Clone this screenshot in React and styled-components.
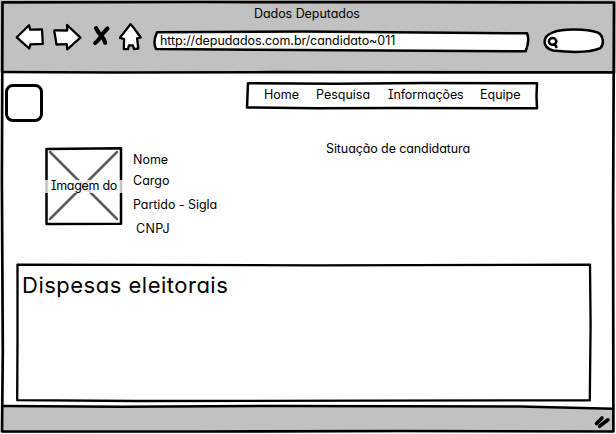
import React from "react";
import styled, { createGlobalStyle } from "styled-components";

const GlobalStyle = createGlobalStyle`
  * { box-sizing: border-box; }
  body {
    margin: 0;
    background: #fff;
    color: #000;
    font-family: Inter, "Noto Sans", sans-serif;
    font-feature-settings: "cv11" 1, "cv08" 1;
  }
`;

const Window = styled.main`
  position: relative;
  width: 616px;
  height: 434px;
  display: flex;
  flex-direction: column;
  overflow: hidden;
  background: #fff;
`;

const Outline = styled.svg`
  position: absolute;
  inset: 0;
  width: 100%;
  height: 100%;
  overflow: visible;
  pointer-events: none;
  fill: none;
  stroke: #000;
  stroke-width: ${(p) => p.$weight || 2.5};
  stroke-linejoin: round;
  stroke-linecap: round;
`;

const Text = styled.span`
  position: relative;
  display: block;
  white-space: nowrap;
  font-size: 12.5px;
  line-height: 16px;
  letter-spacing: ${(p) => p.$track || 0}px;
`;

const Chrome = styled.header`
  height: 72px;
  flex: none;
  background: #c1c1c1;
  padding: 6px 12px 0 15px;
`;

const TitleBar = styled.div`
  padding-left: 239px;
  height: 17px;
`;

const Toolbar = styled.div`
  display: flex;
  align-items: flex-start;
`;

const Icon = styled.svg`
  flex: none;
  width: ${(p) => p.$w}px;
  height: 30px;
  margin-right: ${(p) => p.$gap || 0}px;
  fill: #fff;
  stroke: #000;
  stroke-width: 2.3;
  stroke-linejoin: round;
  stroke-linecap: round;
`;

const AddressBar = styled.div`
  position: relative;
  flex: none;
  width: 376px;
  height: 22px;
  margin: 7px 14px 0 0;
  padding: 3px 0 0 7px;
`;

const Search = styled.div`
  position: relative;
  flex: none;
  width: 62px;
  height: 26px;
  margin-top: 5px;
`;

const Page = styled.section`
  flex: 1;
  padding: 10px 24px 0 5px;
`;

const TopRow = styled.div`
  display: flex;
  align-items: flex-start;
  height: 65px;
`;

const Logo = styled.div`
  width: 38px;
  height: 38px;
  margin-top: 2px;
  border: 3px solid #000;
  border-radius: 8px;
`;

const Nav = styled.nav`
  position: relative;
  width: 293px;
  height: 28px;
  margin-left: 203px;
  padding: 5px 0 0 18px;
  display: flex;
  gap: 18px;
`;

const NavItem = styled(Text)`
  width: ${(p) => p.$w}px;
`;

const Profile = styled.div`
  display: flex;
  height: 116px;
  padding-left: 40px;
`;

const Photo = styled.figure`
  position: relative;
  width: 78px;
  height: 78px;
  margin: 0;
  display: flex;
  align-items: center;
`;

const Caption = styled.figcaption`
  position: relative;
  width: 78px;
  height: 13px;
  display: flex;
  align-items: center;
  justify-content: center;
  background: rgba(255, 255, 255, 0.76);
`;

const Details = styled.div`
  width: 203px;
  padding: 5px 0 0 10px;
`;

const Detail = styled(Text)`
  height: ${(p) => p.$h}px;
  margin-left: ${(p) => p.$indent || 0}px;
`;

const Status = styled.div`
  margin-top: -6px;
`;

const Expenses = styled.section`
  position: relative;
  width: 576px;
  height: 139px;
  margin-left: 11px;
  padding: 8px 0 0 6px;
`;

const Heading = styled.h1`
  margin: 0;
  font-size: 22px;
  line-height: 28px;
  font-weight: 400;
  letter-spacing: ${(p) => p.$track}px;
  white-space: nowrap;
`;

const StatusBar = styled.footer`
  position: relative;
  flex: none;
  height: 28px;
`;

export default function App() {
  return (
    <>
      <GlobalStyle />
      <Window>
        <Chrome>
          <TitleBar>
            <Text $track={-0.05}>Dados Deputados</Text>
          </TitleBar>
          <Toolbar>
            <Icon $w={30} $gap={7} viewBox="0 0 30 30">
              <path d="M1.8 14.3 14 2.2l1.2 4.5 11.8-.4.8 14.5-12.3.6-1.3 4.1Z" />
            </Icon>
            <Icon $w={30} $gap={9} viewBox="0 0 30 30">
              <path d="M2.3 8.5Q2 7 4 7.3l11.2.2-.1-5.5 13.3 12.7-13.1 11.7-.6-5.3-10.2.4Q3.4 14 2.3 8.5Z" />
            </Icon>
            <Icon $w={20} $gap={8} viewBox="-1 0 20 30">
              <g fill="none" strokeWidth="4.2">
                <path d="M4 5.2q2 4.2 5 7.2t4.2 7.4" />
                <path d="M15.4 5.6q-4.2 3.8-6.4 7.6T3.2 20" />
              </g>
            </Icon>
            <Icon $w={24} $gap={10} viewBox="1 0 24 30">
              <path d="M12.5 1.3Q14 2.2 22.7 14.5l-3.6.8 1.2 10.2-4.3.6-1.1-3.8-4 .1-.9 3.8-4.2-.2.3-10-4.3-1.2Z" />
            </Icon>
            <AddressBar>
              <Outline viewBox="0 0 376 22">
                <path fill="#fff" d="M4 2.3 150 1.5 374 3.3q3 7-1.3 18L187 20.2 3 19Q-.5 12 4 2.3Z" />
              </Outline>
              <Text $track={-0.07}>http://depudados.com.br/candidato~011</Text>
            </AddressBar>
            <Search>
              <Outline viewBox="0 0 62 26">
                <path fill="#fff" d="M10 4.3C20 .5 43 .8 55 4.6c6 3.6 6 11.7 2.4 15.6C47 24.8 27 24.4 10 22.5-1 19.6-1.5 8.5 10 4.3Z" />
                <ellipse cx="9.6" cy="13.4" rx="3.7" ry="3.3" />
                <path d="m11.6 16.2 1.8 2.8" />
              </Outline>
            </Search>
          </Toolbar>
        </Chrome>
        <Page>
          <TopRow>
            <Logo />
            <Nav>
              <Outline viewBox="0 0 293 28">
                <path d="M2 1.3 90 1.8 180 1 291 1.3l-.5 13 .5 12L150 26l-80 .3L1 25.5Z" />
              </Outline>
              <NavItem $w={34}>Home</NavItem>
              <NavItem $w={54}>Pesquisa</NavItem>
              <NavItem $w={74} $track={-0.1}>Informações</NavItem>
              <NavItem $w={42}>Equipe</NavItem>
            </Nav>
          </TopRow>
          <Profile>
            <Photo>
              <Outline viewBox="0 0 78 78">
                <path stroke="#5c5c5c" d="m5 5 67 67M72 5 5 72" />
                <path d="M1.5 2 76 1.3v75.5l-74.5.1Z" />
              </Outline>
              <Caption>
                <Text $track={-0.3}>Imagem do</Text>
              </Caption>
            </Photo>
            <Details>
              <Detail $h={21}>Nome</Detail>
              <Detail $h={24}>Cargo</Detail>
              <Detail $h={24} $track={-0.05}>Partido - Sigla</Detail>
              <Detail $h={16} $indent={3} $track={0.4}>CNPJ</Detail>
            </Details>
            <Status>
              <Text $track={-0.1}>Situação de candidatura</Text>
            </Status>
          </Profile>
          <Expenses>
            <Outline viewBox="0 0 576 139" $weight={2.3}>
              <path d="M1.5 1.6 300 2.3l274-.7.6 60-.8 75.8-223.8.2-230 .4-118.8-.8.3-62Z" />
            </Outline>
            <Heading $track={0.5}>Dispesas eleitorais</Heading>
          </Expenses>
        </Page>
        <StatusBar>
          <Outline viewBox="0 0 616 28">
            <path stroke="none" fill="#c1c1c1" d="M3 0 200 1l322 .5L614 3v23L3 27Z" />
            <path d="M3 0 120 .7 280 0 520 .5 613 2.8" />
            <g strokeWidth="3.6">
              <path d="m596.5 17.5 5.5-5.5M599.5 20.3l8.5-6.5" />
            </g>
          </Outline>
        </StatusBar>
        <Outline viewBox="0 0 616 434" $weight={2.7}>
          <path d="M2.5 2.3 200 2l220 .2 194 .3-.9 210 .3 219L400 431l-200 .5-198-.1.8-80-.9-170Z" />
          <path d="m3 72 110 .5 160-.3 341 .2" />
        </Outline>
      </Window>
    </>
  );
}
